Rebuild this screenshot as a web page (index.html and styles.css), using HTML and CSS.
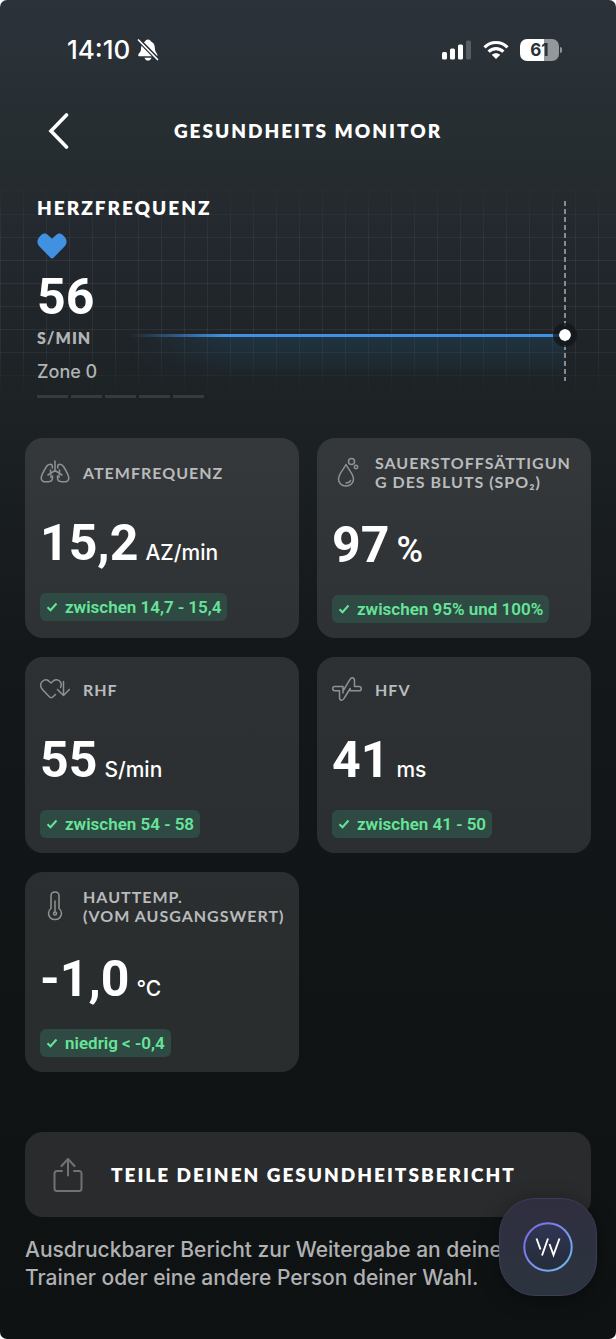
FILE: index.html
```html
<!DOCTYPE html>
<html lang="de">
<head>
  <meta charset="UTF-8" />
  <meta name="viewport" content="width=device-width, initial-scale=1.0"/>
  <title>Gesundheits Monitor</title>
  <link rel="stylesheet" href="styles.css">
</head>

<body>
  <div class="screen">
    <div class="status-bar">
      <div class="status-time">
        <span>14:10</span>
        <svg width="22" height="24" viewBox="0 0 22 24" aria-hidden="true">
          <path d="M11 1.500C12.700 1.500 13.500 2.500 14 3.500C17.500 5 17.800 8 18 11.500C18.100 14 20.500 15.500 20.500 17.200C20.500 18 20 18.300 19 18.300H3C1.500 18.300 1.200 17.700 1.200 17C1.200 15.500 4 14 4 11.500C4.200 8 4.500 5 8 3.500C8.500 2.500 9.300 1.500 11 1.500Z" fill="#fff"/>
          <path d="M7.500 19.800H14.500C14 21.700 12.600 22.600 11 22.600S8 21.700 7.500 19.800Z" fill="#fff"/>
          <path d="M2 2.300L20.800 21.500" stroke="#293036" stroke-width="4.200"/>
          <path d="M1.500 2L20.500 21.500" stroke="#fff" stroke-width="1.700" stroke-linecap="round"/>
        </svg>
      </div>
      <div class="status-icons">
        <svg width="31" height="20" viewBox="0 0 31 20" aria-hidden="true">
          <rect x="1" y="12" width="5" height="7.500" rx="1.500" fill="#fff"/>
          <rect x="9" y="8.500" width="5" height="11" rx="1.500" fill="#fff"/>
          <rect x="17" y="4.500" width="5" height="15" rx="1.500" fill="#fff"/>
          <rect x="25" y="0.500" width="5" height="19" rx="1.500" fill="#fff" fill-opacity="0.220"/>
        </svg>
        <svg width="26" height="20" viewBox="0 0 26 20" aria-hidden="true">
          <g fill="none" stroke="#fff" stroke-width="3.200">
            <path d="M1.500 7.300C8 0.900 18 0.900 24.500 7.300"/>
            <path d="M5.600 11.700C9.900 7.500 16.100 7.500 20.400 11.700"/>
          </g>
          <path d="M13 19L8.700 14.800C11 12.700 15 12.700 17.300 14.800Z" fill="#fff"/>
        </svg>
        <div class="battery">
          <span class="battery-level">61</span>
        </div>
      </div>
    </div>

    <header class="nav">
      <button class="back" aria-label="Zurück">
        <svg width="22" height="36" viewBox="0 0 22 36" aria-hidden="true">
          <path d="M18.500 2L3 18L18.500 34" fill="none" stroke="#fff" stroke-width="3.600" stroke-linecap="round" stroke-linejoin="miter"/>
        </svg>
      </button>
      <h1>GESUNDHEITS MONITOR</h1>
    </header>

    <section class="heart">
      <div class="trend" aria-hidden="true">
        <div class="trend-line"></div>
        <div class="trend-fill"></div>
        <div class="trend-now"></div>
        <div class="trend-dot"></div>
      </div>
      <div class="heart-info">
        <h2>HERZFREQUENZ</h2>
        <svg class="heart-icon" width="30" height="26" viewBox="0 0 30 26" aria-hidden="true">
          <path d="M3 3.300L4 2.200C6 0 9 0 11.200 2.200L15 5.800L18.800 2.200C21 0 24 0 26 2.200L27.300 3.500C30.300 6.700 30.300 10.500 27.500 13.500L17 24.300C15.500 25.900 14.500 25.900 13 24.300L2.500 13.500C-0.300 10.500 -0.300 6.700 3 3.300Z" fill="#4191e3"/>
        </svg>
        <div class="heart-value">56</div>
        <div class="heart-unit">S/MIN</div>
        <div class="heart-zone">Zone 0</div>
        <div class="zones"><i></i><i></i><i></i><i></i><i></i></div>
      </div>
    </section>

    <main class="cards">
      <article class="card">
        <div class="card-head">
          <svg width="30" height="30" viewBox="0 0 30 30" aria-hidden="true">
            <path d="M15 4V13.500L8 18M15 13.500L22 18M10.500 13V16.500M19.500 13V16.500M11 18V20.500M19 18V20.500"/>
            <path d="M12.300 11V9.500C12.300 6.500 8.500 6.300 6.500 9.500C4 13.500 1.200 18 1.200 21C1.200 25.500 6 25 8.500 24.700C11.500 24.500 12.500 23.500 12.500 21V19"/>
            <path d="M17.700 11V9.500C17.700 6.500 21.500 6.300 23.500 9.500C26 13.500 28.800 18 28.800 21C28.800 25.500 24 25 21.500 24.700C18.500 24.500 17.500 23.500 17.500 21V19"/>
          </svg>
          <h3>ATEMFREQUENZ</h3>
        </div>
        <p class="value">15,2 <span class="unit">AZ/min</span></p>
        <p class="range"><svg width="12" height="10" viewBox="0 0 12 10" aria-hidden="true"><path d="M1.500 5.200L4.500 8.200L10.500 1.500"/></svg>zwischen 14,7 - 15,4</p>
      </article>

      <article class="card">
        <div class="card-head">
          <svg width="30" height="30" viewBox="0 0 30 30" aria-hidden="true">
            <path d="M14 7.500C11.500 12.500 6.500 17 6.500 22C6.500 26 9.500 29 14 29S21.500 26 21.500 22C21.500 17 16.500 12.500 14 7.500Z"/>
            <path d="M14 26C16.500 26 18 25 18.500 23.500"/>
            <circle cx="19.500" cy="4.500" r="3"/>
            <circle cx="24" cy="10" r="1.700"/>
          </svg>
          <h3>SAUERSTOFFSÄTTIGUN<br>G DES BLUTS (SPO₂)</h3>
        </div>
        <p class="value">97 <span class="unit unit-percent">%</span></p>
        <p class="range"><svg width="12" height="10" viewBox="0 0 12 10" aria-hidden="true"><path d="M1.500 5.200L4.500 8.200L10.500 1.500"/></svg>zwischen 95% und 100%</p>
      </article>

      <article class="card">
        <div class="card-head">
          <svg width="30" height="30" viewBox="0 0 30 30" aria-hidden="true">
            <path d="M15.500 20.500L13 22.800C11.800 24 10.500 24 9.300 22.800L2.500 15.500C-0.500 12 0.500 9 2.500 7.300C5 5 7.500 5.500 9.300 7.500L11 9L12.700 7.500C14.500 5.500 17.500 5 19.800 7.300C21.500 9 21.700 11 20.500 13.500"/>
            <path d="M23.500 7.500V21.500M17.500 15.500L23.500 21.500L29.300 15.500"/>
          </svg>
          <h3>RHF</h3>
        </div>
        <p class="value">55 <span class="unit">S/min</span></p>
        <p class="range"><svg width="12" height="10" viewBox="0 0 12 10" aria-hidden="true"><path d="M1.500 5.200L4.500 8.200L10.500 1.500"/></svg>zwischen 54 - 58</p>
      </article>

      <article class="card">
        <div class="card-head">
          <svg width="30" height="30" viewBox="0 0 30 30" aria-hidden="true">
            <path d="M11 19V12.500H2.500C1.200 12.500 0.800 13.500 0.800 14.700S1.500 16.700 2.700 16.700H7.500V23.500C7.500 25.500 8.300 26.300 9.700 26.300C11 26.300 11.500 25.500 12.300 24L18.200 14.500V16.800H27C28.500 16.800 29.200 16 29.200 14.700S28.500 12.500 27 12.500H22.500V6.500C22.500 4.500 21.700 3.700 20.300 3.700C19 3.700 18.400 4.500 17.700 5.800L11 17"/>
          </svg>
          <h3>HFV</h3>
        </div>
        <p class="value">41 <span class="unit">ms</span></p>
        <p class="range"><svg width="12" height="10" viewBox="0 0 12 10" aria-hidden="true"><path d="M1.500 5.200L4.500 8.200L10.500 1.500"/></svg>zwischen 41 - 50</p>
      </article>

      <article class="card">
        <div class="card-head">
          <svg width="30" height="30" viewBox="0 0 30 30" aria-hidden="true">
            <path d="M11 17.500V5C11 2.300 12.700 1 15 1S19 2.300 19 5V17.500C20.700 18.700 21.500 20.300 21.500 22.300C21.500 26 18.700 28.600 15 28.600S8.500 26 8.500 22.300C8.500 20.300 9.300 18.700 11 17.500Z"/>
            <path d="M15 10V20.500"/>
            <circle cx="15" cy="22.500" r="1.500"/>
          </svg>
          <h3>HAUTTEMP.<br>(VOM AUSGANGSWERT)</h3>
        </div>
        <p class="value">-1,0 <span class="unit">°C</span></p>
        <p class="range"><svg width="12" height="10" viewBox="0 0 12 10" aria-hidden="true"><path d="M1.500 5.200L4.500 8.200L10.500 1.500"/></svg>niedrig &lt; -0,4</p>
      </article>
    </main>

    <section class="report">
      <button class="share">
        <svg width="30" height="36" viewBox="0 0 30 36" aria-hidden="true">
          <path d="M9 14H4C2.300 14 1.500 14.800 1.500 16.500V31.500C1.500 33.200 2.300 34 4 34H26C27.700 34 28.500 33.200 28.500 31.500V16.500C28.500 14.800 27.700 14 26 14H21M15 18.500V2M8.500 9L15 2L21.500 9"/>
        </svg>
        TEILE DEINEN GESUNDHEITSBERICHT
      </button>
      <p>Ausdruckbarer Bericht zur Weitergabe an deinen Trainer oder eine andere Person deiner Wahl.</p>
    </section>

    <button class="coach" aria-label="Coach">
      <svg width="50" height="50" viewBox="0 0 50 50" aria-hidden="true">
        <defs>
          <linearGradient id="ring" x1="0" y1="0" x2="1" y2="1">
            <stop offset="0" stop-color="#7d62e0"/>
            <stop offset="0.500" stop-color="#7d8ff0"/>
            <stop offset="1" stop-color="#6cc0ea"/>
          </linearGradient>
          <linearGradient id="disc" x1="0" y1="0" x2="0" y2="1">
            <stop offset="0" stop-color="#303554"/>
            <stop offset="1" stop-color="#252c38"/>
          </linearGradient>
        </defs>
        <circle cx="25" cy="25" r="23.700" fill="url(#disc)" stroke="url(#ring)" stroke-width="2"/>
        <path d="M13.500 16.500L17.500 27.500M25 16.500L19 33.500M26.500 22L30.500 33L36.500 16.500" fill="none" stroke="#fff" stroke-width="1.900"/>
      </svg>
    </button>
  </div>
</body>
</html>
```
FILE: styles.css
```css
* {
  box-sizing: border-box;
}

body {
  margin: 0;
  background: #fff;
  color: #fff;
  font-family: Lato, 'Open Sans', sans-serif;
}

h1, h2, h3, p {
  margin: 0;
}

button {
  border: none;
  padding: 0;
  background: none;
  color: inherit;
  font-family: inherit;
  cursor: pointer;
}

svg {
  display: block;
  flex: none;
}

.screen {
  position: relative;
  min-height: 100vh;
  border-radius: 7px;
  overflow: hidden;
  background: linear-gradient(to bottom, #2b323a 0, #262d30 150px, #22272d 260px, #1d2225 400px, #14181b 650px, #101415 1000px, #0f1213 100%);
}

/* status bar */
.status-bar {
  height: 100px;
  padding: 0 57px 0 67px;
  display: flex;
  align-items: center;
  justify-content: space-between;
}

.status-time {
  display: flex;
  align-items: center;
  gap: 7px;
  font: 500 26px/28px Inter, sans-serif;
}

.status-icons {
  display: flex;
  align-items: center;
  gap: 11px;
}

.battery {
  position: relative;
  width: 39px;
  height: 22px;
  border-radius: 7px;
  background: linear-gradient(to right, #fff 61%, #94989b 61%);
  text-align: center;
}

.battery::after {
  content: '';
  position: absolute;
  right: -3px;
  top: 8px;
  width: 2px;
  height: 6px;
  border-radius: 0 2px 2px 0;
  background: #94989b;
}

.battery-level {
  display: block;
  color: #293036;
  font: 700 17px/22px Inter, sans-serif;
}

/* title row */
.nav {
  height: 62px;
  padding: 0 48px;
  display: grid;
  grid-template-columns: 22px 1fr 22px;
  align-items: center;
}

.nav h1 {
  text-align: center;
}

.nav h1,
.heart h2,
.share {
  font-size: 19px;
  line-height: 24px;
  font-weight: 800;
  letter-spacing: 2px;
}

/* heart rate */
.heart {
  position: relative;
  display: grid;
  height: 238px;
}

.heart::before {
  content: '';
  position: absolute;
  inset: 16px 0 0;
  background:
    linear-gradient(to right, rgba(255, 255, 255, 0.06) 1px, transparent 1px) 0 0 / 23px 23px,
    linear-gradient(to bottom, rgba(255, 255, 255, 0.06) 1px, transparent 1px) 0 13px / 23px 23px;
  mask-image: linear-gradient(to bottom, transparent, #000 30%, #000 75%, transparent);
}

.heart-info,
.trend {
  grid-area: 1 / 1;
  position: relative;
}

.heart-info {
  padding: 34px 37px 0;
}

.heart-icon {
  margin: 13px 0 12px;
}

.heart-value,
.value {
  font-family: Roboto, sans-serif;
  font-size: 50px;
  line-height: 52px;
  font-weight: 700;
}

.heart-unit {
  margin-top: 5px;
  color: #b0b3b4;
  font-size: 16px;
  line-height: 20px;
  font-weight: 800;
  letter-spacing: 1px;
}

.heart-zone {
  margin-top: 12px;
  color: #b0b3b4;
  font: 500 18px/24px Inter, sans-serif;
}

.zones {
  display: flex;
  gap: 3px;
  margin-top: 11px;
}

.zones i {
  width: 31px;
  height: 3px;
  background: #373b3e;
}

.trend {
  margin: 0 51px 0 129px;
}

.trend-line {
  position: absolute;
  top: 172px;
  left: 0;
  right: 0;
  height: 3px;
  background: linear-gradient(to right, transparent, #4191e3 22%);
}

.trend-fill {
  position: absolute;
  top: 175px;
  left: 0;
  right: 0;
  height: 42px;
  background: linear-gradient(to bottom, rgba(30, 90, 125, 0.3), transparent);
  mask-image: linear-gradient(to right, transparent, #000 25%);
}

.trend-now {
  position: absolute;
  top: 39px;
  right: -1px;
  width: 2px;
  height: 180px;
  background: repeating-linear-gradient(to bottom, #888c8e 0 5px, transparent 5px 8px);
}

.trend-dot {
  position: absolute;
  top: 161px;
  right: -12px;
  width: 24px;
  height: 24px;
  border: 6px solid rgba(18, 21, 23, 0.75);
  border-radius: 50%;
  background: #fff;
  background-clip: padding-box;
}

/* metric cards */
.cards {
  display: grid;
  grid-template-columns: repeat(2, minmax(0, 1fr));
  gap: 19px 18px;
  padding: 38px 25px 0;
}

.card {
  display: flex;
  flex-direction: column;
  justify-content: center;
  align-items: flex-start;
  padding: 15px;
  border-radius: 18px;
  background: rgba(255, 255, 255, 0.11);
}

.card-head {
  display: flex;
  align-items: center;
  gap: 13px;
  min-height: 34px;
  color: #b9bbbc;
}

.card-head svg,
.share svg {
  fill: none;
  stroke: #8f9293;
  stroke-width: 1.5;
  stroke-linecap: round;
  stroke-linejoin: round;
}

.card h3 {
  font-size: 16px;
  line-height: 19px;
  font-weight: 700;
  letter-spacing: 1px;
  white-space: nowrap;
}

.value {
  display: flex;
  align-items: baseline;
  gap: 7px;
  height: 52px;
  margin: 28px 0 24px;
}

.unit {
  font-family: Inter, sans-serif;
  font-size: 21px;
  line-height: 28px;
  font-weight: 500;
}

.unit-percent {
  font-family: Roboto, sans-serif;
  font-size: 36px;
}

.range {
  display: flex;
  align-items: center;
  gap: 7px;
  padding: 0 6px;
  border-radius: 6px;
  background: #2f4a42;
  color: #66e59a;
  font: 600 17px/28px Roboto, sans-serif;
}

.range svg {
  fill: none;
  stroke: #66e59a;
  stroke-width: 2;
}

/* report */
.report {
  padding: 60px 25px 46px;
}

.share {
  display: flex;
  align-items: center;
  gap: 28px;
  width: 100%;
  height: 85px;
  padding: 0 28px;
  border-radius: 18px;
  background: #292b2d;
}

.share svg {
  stroke: #707273;
  stroke-width: 2;
}

.report p {
  margin-top: 19px;
  padding-right: 24px;
  color: #b0b1b2;
  font: 500 21px/28px Inter, sans-serif;
}

.coach {
  position: absolute;
  right: 19px;
  bottom: 43px;
  display: grid;
  place-items: center;
  width: 98px;
  height: 98px;
  border: 1px solid #3d3b55;
  border-radius: 36px;
  background: linear-gradient(to bottom, #302e40, #2b343e);
  box-shadow: 0 4px 20px rgba(0, 0, 0, 0.4);
}
```
